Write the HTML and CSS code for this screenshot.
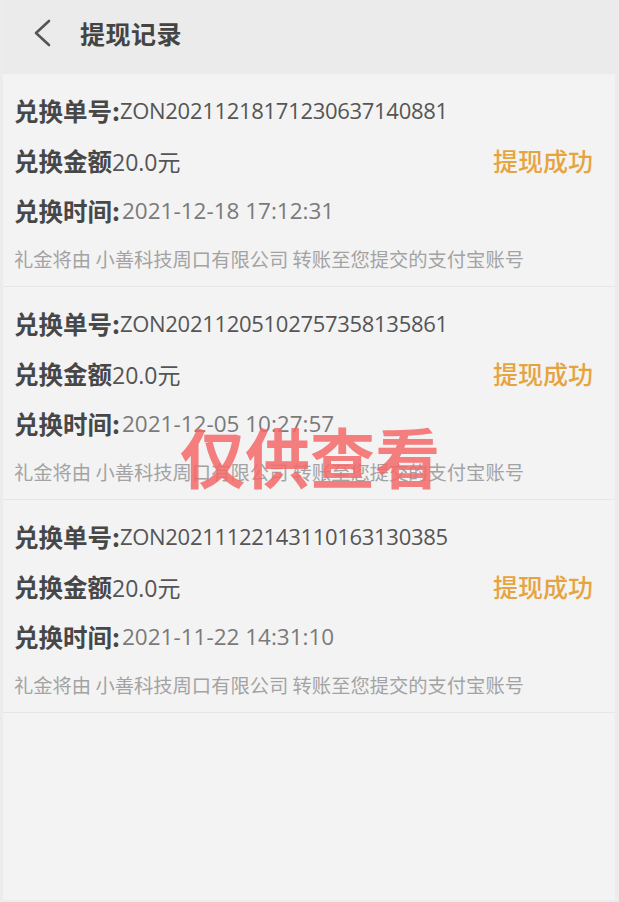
FILE: index.html
```html
<!DOCTYPE html>
<html lang="zh-CN">
<head>
<meta charset="utf-8">
<title>提现记录</title>
<link rel="stylesheet" href="styles.css">
</head>
<body>
<div class="frame">
  <header class="topbar">
    <svg class="back" width="24" height="30" viewBox="0 0 24 30">
      <path d="M19 3 L6 15 L19 27" fill="none" stroke="#555" stroke-width="2.6" stroke-linecap="round" stroke-linejoin="round"/>
    </svg>
    <h1 class="title">提现记录</h1>
  </header>
  <main class="list">
    <section class="item">
      <div class="row"><span class="label">兑换单号:</span><span class="order">ZON20211218171230637140881</span></div>
      <div class="row split"><span><span class="label">兑换金额</span><span class="amount">20.0元</span></span><span class="status">提现成功</span></div>
      <div class="row"><span class="label">兑换时间:</span><span class="time">2021-12-18 17:12:31</span></div>
      <div class="note">礼金将由 小善科技周口有限公司 转账至您提交的支付宝账号</div>
    </section>
    <section class="item">
      <div class="row"><span class="label">兑换单号:</span><span class="order">ZON20211205102757358135861</span></div>
      <div class="row split"><span><span class="label">兑换金额</span><span class="amount">20.0元</span></span><span class="status">提现成功</span></div>
      <div class="row"><span class="label">兑换时间:</span><span class="time">2021-12-05 10:27:57</span></div>
      <div class="note">礼金将由 小善科技周口有限公司 转账至您提交的支付宝账号</div>
    </section>
    <section class="item">
      <div class="row"><span class="label">兑换单号:</span><span class="order">ZON20211122143110163130385</span></div>
      <div class="row split"><span><span class="label">兑换金额</span><span class="amount">20.0元</span></span><span class="status">提现成功</span></div>
      <div class="row"><span class="label">兑换时间:</span><span class="time">2021-11-22 14:31:10</span></div>
      <div class="note">礼金将由 小善科技周口有限公司 转账至您提交的支付宝账号</div>
    </section>
  </main>
  <div class="watermark">仅供查看</div>
</div>
</body>
</html>
```

FILE: styles.css
```css
html, body {
  margin: 0;
  padding: 0;
  background: #ececec;
}
body {
  width: 619px;
  height: 902px;
  overflow: hidden;
  font-family: "Open Sans", "Noto Sans CJK SC", sans-serif;
}
.frame {
  position: relative;
  margin: 0 4px 0 3px;
  height: 900px;
  background: #f3f3f3;
  display: flex;
  flex-direction: column;
}
.topbar {
  height: 74px;
  background: #ebebeb;
  display: flex;
  align-items: center;
  padding-left: 27px;
  padding-bottom: 8px;
  box-sizing: border-box;
}
.back {
  display: block;
  margin-right: 26px;
}
.title {
  margin: 0;
  font-family: "Noto Sans CJK SC", sans-serif;
  font-size: 25px;
  font-weight: 700;
  color: #444;
  letter-spacing: 0.5px;
}
.list {
  display: flex;
  flex-direction: column;
}
.item {
  padding: 11px 22px 4px 11px;
  border-bottom: 1px solid #e6e6e6;
}
.row {
  height: 50px;
  display: flex;
  align-items: center;
  white-space: nowrap;
}
.split {
  justify-content: space-between;
}
.label {
  font-family: "Noto Sans CJK SC", sans-serif;
  font-size: 24.5px;
  font-weight: 700;
  color: #474747;
}
.order {
  font-size: 22px;
  color: #555;
  letter-spacing: -0.3px;
}
.amount {
  font-size: 23px;
  color: #555;
}
.amount, .order {
  font-family: "Open Sans", "Noto Sans CJK SC", sans-serif;
}
.time {
  font-size: 22.5px;
  color: #7a7a7a;
  margin-left: 2px;
}
.status {
  font-family: "Noto Sans CJK SC", sans-serif;
  font-size: 25px;
  font-weight: 500;
  color: #e6a43f;
}
.note {
  height: 47px;
  display: flex;
  align-items: center;
  font-family: "Noto Sans CJK SC", sans-serif;
  font-size: 19.3px;
  color: #a3a3a3;
  white-space: pre;
}
.watermark {
  position: absolute;
  left: 177px;
  top: 411px;
  font-family: "Noto Sans CJK SC", sans-serif;
  font-size: 65px;
  font-weight: 700;
  color: rgba(243, 104, 104, 0.85);
  line-height: 88px;
}
```
